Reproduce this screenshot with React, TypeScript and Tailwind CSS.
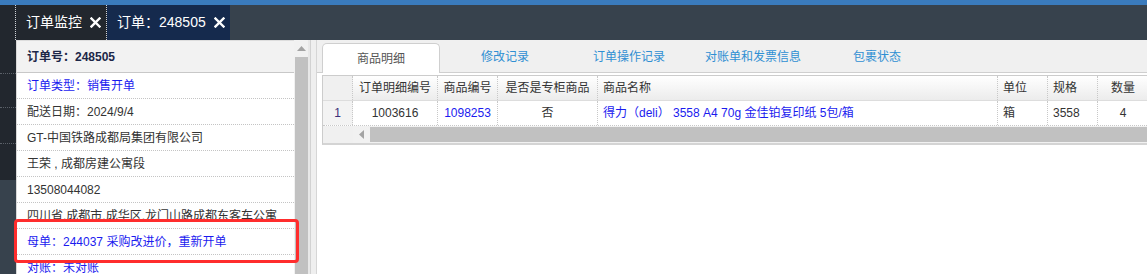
import React from "react";

const Close = () => (
  <svg width="11" height="11" viewBox="0 0 11 11" className="ml-[8px]">
    <path d="M1.5 1.5 L9.5 9.5 M9.5 1.5 L1.5 9.5" stroke="#ffffff" strokeWidth="2.4" strokeLinecap="square" />
  </svg>
);

const leftRows: { text: string; blue?: boolean }[] = [
  { text: "订单类型：销售开单", blue: true },
  { text: "配送日期：2024/9/4" },
  { text: "GT-中国铁路成都局集团有限公司" },
  { text: "王荣 , 成都房建公寓段" },
  { text: "13508044082" },
  { text: "四川省.成都市.成华区.龙门山路成都东客车公寓" },
  { text: "母单：244037 采购改进价，重新开单", blue: true },
  { text: "对账：未对账", blue: true },
];

const tabs = ["商品明细", "修改记录", "订单操作记录", "对账单和发票信息", "包裹状态"];

export default function App() {
  return (
    <div
      className="relative w-[1147px] h-[274px] overflow-hidden bg-white text-[12px] text-[#333]"
      style={{ fontFamily: '"Liberation Sans", "Noto Sans CJK SC", sans-serif' }}
    >
      <div className="h-[5px] bg-[#3a7bbd]" />
      <div className="flex h-[35px] bg-[#37424d]">
        <div className="w-[16px] bg-[#22272e] border-r border-dotted border-[#cfd3d8]" />
        <div className="flex items-center w-[91px] pl-[10px] bg-[#22272e] border-r border-dotted border-[#cfd3d8] text-white text-[14px]">
          订单监控
          <Close />
        </div>
        <div className="flex items-center w-[123px] pl-[10px] bg-[#152a4d] text-white text-[14px]">
          订单：248505
          <Close />
        </div>
      </div>
      <div className="flex h-[234px] overflow-hidden">
        <div className="w-[16px] flex flex-col">
          <div className="h-[140px] bg-[#22272e] flex flex-col">
            <div className="h-[34px] border-b border-dotted border-[#5a6068]" />
            <div className="h-[34px] border-b border-dotted border-[#5a6068]" />
            <div className="h-[36px] border-b border-dotted border-[#5a6068]" />
          </div>
          <div className="flex-1 bg-[#37424d]" />
        </div>
        <div className="w-[278px] border-l border-[#d8d8d8] flex flex-col overflow-hidden">
          <div className="h-[33px] shrink-0 bg-[#f2f2f2] border-t border-b border-t-[#dddddd] border-b-[#c8c8c8] flex items-center pl-[10px] font-bold text-[#1c2748]">
            订单号：248505
          </div>
          {leftRows.map((r, i) => (
            <div
              key={i}
              className={`h-[26px] shrink-0 border-b border-dotted border-[#c4c4c4] flex items-center pl-[10px] whitespace-nowrap overflow-hidden ${
                r.blue ? "text-[#1b1bef]" : "text-[#333333]"
              }`}
            >
              {r.text}
            </div>
          ))}
        </div>
        <div className="w-[14px] bg-[#f1f1f1] flex flex-col items-stretch">
          <div className="h-[17px] flex items-center justify-center">
            <svg width="9" height="5" viewBox="0 0 9 5">
              <path d="M0 5 L4.5 0 L9 5 Z" fill="#a3a3a3" />
            </svg>
          </div>
          <div className="flex-1 ml-[1px] bg-[#c1c1c1]" />
        </div>
        <div className="w-[8px] flex">
          <div className="w-[2px] bg-[#e8e8e8]" />
          <div className="w-[1px] bg-[#d2d2d2]" />
          <div className="flex-1 bg-[#efefef]" />
        </div>
        <div className="flex-1 border-l border-[#d6d6d6] flex flex-col min-w-0">
          <div className="h-[33px] shrink-0 bg-[#f0f0f0] border-b border-[#cfcfcf] flex items-end pl-[5px] gap-[6px]">
            {tabs.map((t, i) =>
              i === 0 ? (
                <div
                  key={t}
                  className="w-[118px] h-[30px] -mb-[1px] bg-white border border-b-0 border-[#cfcfcf] rounded-t-[5px] flex items-center justify-center text-[#555]"
                >
                  {t}
                </div>
              ) : (
                <div key={t} className="w-[118px] h-[30px] flex items-center justify-center text-[#2f8fd3]">
                  {t}
                </div>
              )
            )}
          </div>
          <div className="pl-[5px] pt-[2px]">
            <div className="border border-r-0 border-[#cccccc] border-b-2 border-b-[#d4d4d4]">
              <div className="flex h-[25px] bg-linear-to-b from-[#ffffff] to-[#ececec] border-b border-[#dddddd] text-[#333]">
                <div className="w-[30px] shrink-0 bg-[#f0f0f0] border-r border-dotted border-[#c8c8c8]" />
                <div className="w-[85px] shrink-0 flex items-center justify-center border-r border-dotted border-[#c8c8c8]">订单明细编号</div>
                <div className="w-[60px] shrink-0 flex items-center justify-center border-r border-dotted border-[#c8c8c8]">商品编号</div>
                <div className="w-[100px] shrink-0 flex items-center justify-center border-r border-dotted border-[#c8c8c8]">是否是专柜商品</div>
                <div className="w-[400px] shrink-0 flex items-center pl-[5px] border-r border-dotted border-[#c8c8c8]">商品名称</div>
                <div className="w-[50px] shrink-0 flex items-center pl-[5px] border-r border-dotted border-[#c8c8c8]">单位</div>
                <div className="w-[50px] shrink-0 flex items-center pl-[5px] border-r border-dotted border-[#c8c8c8]">规格</div>
                <div className="w-[50px] shrink-0 flex items-center justify-center">数量</div>
              </div>
              <div className="flex h-[25px] border-b border-dotted border-[#c8c8c8]">
                <div className="w-[30px] shrink-0 bg-[#f3f3f3] flex items-center justify-center text-[#3b2f7a] border-r border-dotted border-[#c8c8c8]">1</div>
                <div className="w-[85px] shrink-0 flex items-center justify-center border-r border-dotted border-[#c8c8c8]">1003616</div>
                <div className="w-[60px] shrink-0 flex items-center justify-center text-[#1b1bef] border-r border-dotted border-[#c8c8c8]">1098253</div>
                <div className="w-[100px] shrink-0 flex items-center justify-center border-r border-dotted border-[#c8c8c8]">否</div>
                <div className="w-[400px] shrink-0 flex items-center pl-[5px] text-[#1b1bef] whitespace-nowrap border-r border-dotted border-[#c8c8c8]">
                  得力（deli） 3558 A4 70g 金佳铂复印纸 5包/箱
                </div>
                <div className="w-[50px] shrink-0 flex items-center pl-[5px] border-r border-dotted border-[#c8c8c8]">箱</div>
                <div className="w-[50px] shrink-0 flex items-center pl-[5px] border-r border-dotted border-[#c8c8c8]">3558</div>
                <div className="w-[50px] shrink-0 flex items-center justify-center">4</div>
              </div>
              <div className="flex h-[17px] bg-[#f1f1f1]">
                <div className="w-[30px] shrink-0 bg-[#f0f0f0]" />
                <div className="w-[17px] shrink-0 flex items-center justify-center">
                  <svg width="5" height="9" viewBox="0 0 5 9">
                    <path d="M5 0 L0 4.5 L5 9 Z" fill="#a3a3a3" />
                  </svg>
                </div>
                <div className="flex-1 my-[1px] bg-[#c1c1c1]" />
              </div>
            </div>
          </div>
        </div>
      </div>
      <div className="absolute left-[14px] top-[219px] w-[285px] h-[44px] border-[3px] border-[#ff2d2d] rounded-[4px]" />
    </div>
  );
}
